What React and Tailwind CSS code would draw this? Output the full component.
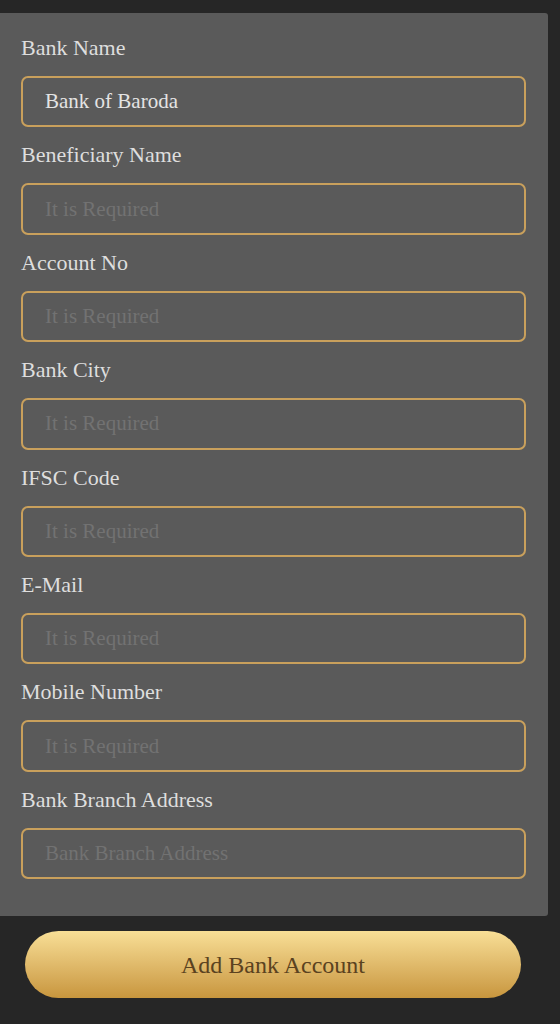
import React from "react";

const fields = [
  { label: "Bank Name", value: "Bank of Baroda" },
  { label: "Beneficiary Name", placeholder: "It is Required" },
  { label: "Account No", placeholder: "It is Required" },
  { label: "Bank City", placeholder: "It is Required" },
  { label: "IFSC Code", placeholder: "It is Required" },
  { label: "E-Mail", placeholder: "It is Required" },
  { label: "Mobile Number", placeholder: "It is Required" },
  { label: "Bank Branch Address", placeholder: "Bank Branch Address" },
];

export default function App() {
  return (
    <div
      className="min-h-[1024px] w-[560px] bg-[#262626] pt-[13px]"
      style={{ fontFamily: '"Liberation Serif", "Times New Roman", serif' }}
    >
      <div className="w-[548px] bg-[#5a5a5a] rounded-r-[3px] pt-[21px] pb-[23px] pl-[21px] pr-[22px]">
        {fields.map((f) => (
          <div key={f.label} className="flex flex-col pb-[14px]">
            <label className="h-[28px] leading-[28px] text-[22px] text-[#dedede]">
              {f.label}
            </label>
            <input
              readOnly
              defaultValue={f.value || ""}
              placeholder={f.placeholder || ""}
              className="mt-[14px] h-[51.4px] w-full rounded-[7px] border-2 border-[#c9a05c] bg-transparent pl-[22px] text-[21px] text-[#e4e4e4] placeholder:text-[#727272] outline-none"
              style={{ fontFamily: '"Liberation Serif", "Times New Roman", serif' }}
            />
          </div>
        ))}
      </div>
      <div className="pt-[15px] pl-[25px]">
        <button className="h-[67px] w-[496px] rounded-full bg-gradient-to-b from-[#f8df96] to-[#c8963d] text-[24px] text-[#5a4220]"
          style={{ fontFamily: '"Liberation Serif", "Times New Roman", serif' }}
        >
          Add Bank Account
        </button>
      </div>
    </div>
  );
}
